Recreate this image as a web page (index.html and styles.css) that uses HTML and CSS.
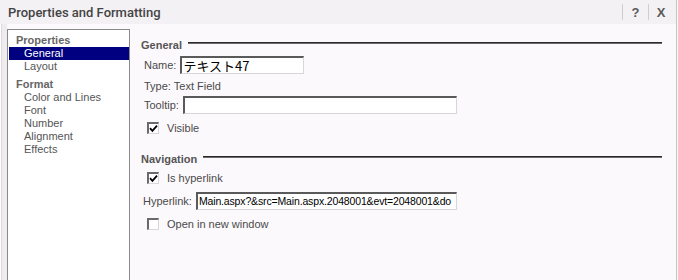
FILE: index.html
```html
<!DOCTYPE html>
<html lang="en">
<head>
  <meta charset="UTF-8"/>
  <title>Properties and Formatting</title>
  <link rel="stylesheet" href="styles.css">
</head>
<body>
<div class="dialog">
  <!-- Title bar -->
  <header class="titlebar">
    <span class="title">Properties and Formatting</span>
    <div class="tools">
      <span class="sep"></span>
      <span class="tool help">?</span>
      <span class="sep"></span>
      <span class="tool close">X</span>
    </div>
  </header>

  <div class="main">
    <div class="edge"></div>

    <!-- Category list -->
    <nav class="nav">
      <div class="nav-head">Properties</div>
      <div class="nav-item selected">General</div>
      <div class="nav-item">Layout</div>
      <div class="nav-head gap">Format</div>
      <div class="nav-item">Color and Lines</div>
      <div class="nav-item">Font</div>
      <div class="nav-item">Number</div>
      <div class="nav-item">Alignment</div>
      <div class="nav-item">Effects</div>
    </nav>

    <!-- Property pane -->
    <section class="pane">
      <div class="group-head">
        <span>General</span>
        <span class="rule"></span>
      </div>
      <div class="row name-row">
        <label>Name:</label>
        <div class="field name-field jp">テキスト47</div>
      </div>
      <div class="row type-row">Type: Text Field</div>
      <div class="row tip-row">
        <label>Tooltip:</label>
        <div class="field tip-field"></div>
      </div>
      <div class="row check-row visible-row">
        <span class="check on"><svg viewBox="0 0 9 9" width="9" height="9"><path d="M1 4.2 L3.4 6.8 L8 1.6" fill="none" stroke="#000" stroke-width="1.8"/></svg></span>
        <span>Visible</span>
      </div>

      <div class="group-head nav-group">
        <span>Navigation</span>
        <span class="rule"></span>
      </div>
      <div class="row check-row link-check">
        <span class="check on"><svg viewBox="0 0 9 9" width="9" height="9"><path d="M1 4.2 L3.4 6.8 L8 1.6" fill="none" stroke="#000" stroke-width="1.8"/></svg></span>
        <span>Is hyperlink</span>
      </div>
      <div class="row link-row">
        <label>Hyperlink:</label>
        <div class="field link-field">Main.aspx?&amp;src=Main.aspx.2048001&amp;evt=2048001&amp;do</div>
      </div>
      <div class="row check-row open-row">
        <span class="check"></span>
        <span>Open in new window</span>
      </div>
    </section>
  </div>
</div>
</body>
</html>
```

FILE: styles.css
```css
*{margin:0;padding:0;box-sizing:border-box}
body{width:678px;height:280px;overflow:hidden;background:#fcf9fc;font-family:"Liberation Sans",Arial,sans-serif;font-size:11px;color:#4a4a4a}
.dialog{height:280px;display:flex;flex-direction:column;border-right:1px solid #c6c4c6;margin-right:1px}

/* title bar */
.titlebar{height:24px;background:#f3f1f4;display:flex;align-items:center;padding-left:8px;flex:none}
.title{font-family:Roboto,"Liberation Sans",sans-serif;font-weight:500;font-size:13px;color:#444;flex:1}
.tools{display:flex;align-items:center;height:100%;padding-right:3px}
.sep{width:1px;height:16px;background:#cfcdd0}
.tool{font-family:"Liberation Sans",Arial,sans-serif;font-weight:bold;color:#5a5a5a;text-align:center}
.help{font-size:13px;width:25px}
.close{font-size:13px;width:24px}

.main{flex:1;display:flex;min-height:0}
.edge{width:7px;flex:none;background:#efecef;border-left:1px solid #fff;box-shadow:inset 1px 0 0 #dcd8dc}

/* left list */
.nav{width:123px;flex:none;margin-top:5px;background:#fff;border:1px solid #8a8a8a;border-bottom:none;padding-top:4px}
.nav-head{font-weight:bold;color:#666;line-height:13px;padding-left:8px}
.nav-head.gap{margin-top:5px}
.nav-item{line-height:13px;padding-left:15px;color:#555;margin-left:1px}
.nav-item.selected{background:#000080;color:#fff}

/* right pane */
.pane{flex:1;padding:15px 14px 0 11px}
.group-head{display:flex;align-items:flex-start;font-weight:bold;color:#555;line-height:13px;gap:6px}
.rule{flex:1;margin-top:3px;height:2px;border-top:1px solid #2a2a2a;border-bottom:1px solid #6a6a6a}
.nav-group{margin-top:19px}
.row{display:flex;align-items:center;padding-left:3px;gap:4px}
.field{height:18px;background:#fff;border-top:2px solid #5a5a5a;border-left:2px solid #5a5a5a;border-right:1px solid #d8d6d8;border-bottom:1px solid #d8d6d8;white-space:nowrap;overflow:hidden;color:#000;line-height:15px;padding-left:2px}
.jp{font-family:"Noto Sans CJK JP",sans-serif;font-size:13px;line-height:15px;padding-left:1px}
.name-row{margin-top:4px}
.name-field{width:124px}
.type-row{margin-top:6px;line-height:13px}
.tip-row{margin-top:3px}
.tip-field{width:274px}
.check-row{height:13px;padding-left:6px;gap:8px}
.visible-row{margin-top:7px}
.check{width:12px;height:12px;background:#fff;border-top:2px solid #6a6a6a;border-left:2px solid #6a6a6a;border-right:1px solid #d8d6d8;border-bottom:1px solid #d8d6d8;display:flex;align-items:center;justify-content:center}
.link-check{margin-top:5px}
.link-row{margin-top:8px;padding-left:2px;gap:4px}
.link-field{width:261px;font-size:10.5px;letter-spacing:-0.15px;padding-left:1px}
.open-row{margin-top:7px}
```
